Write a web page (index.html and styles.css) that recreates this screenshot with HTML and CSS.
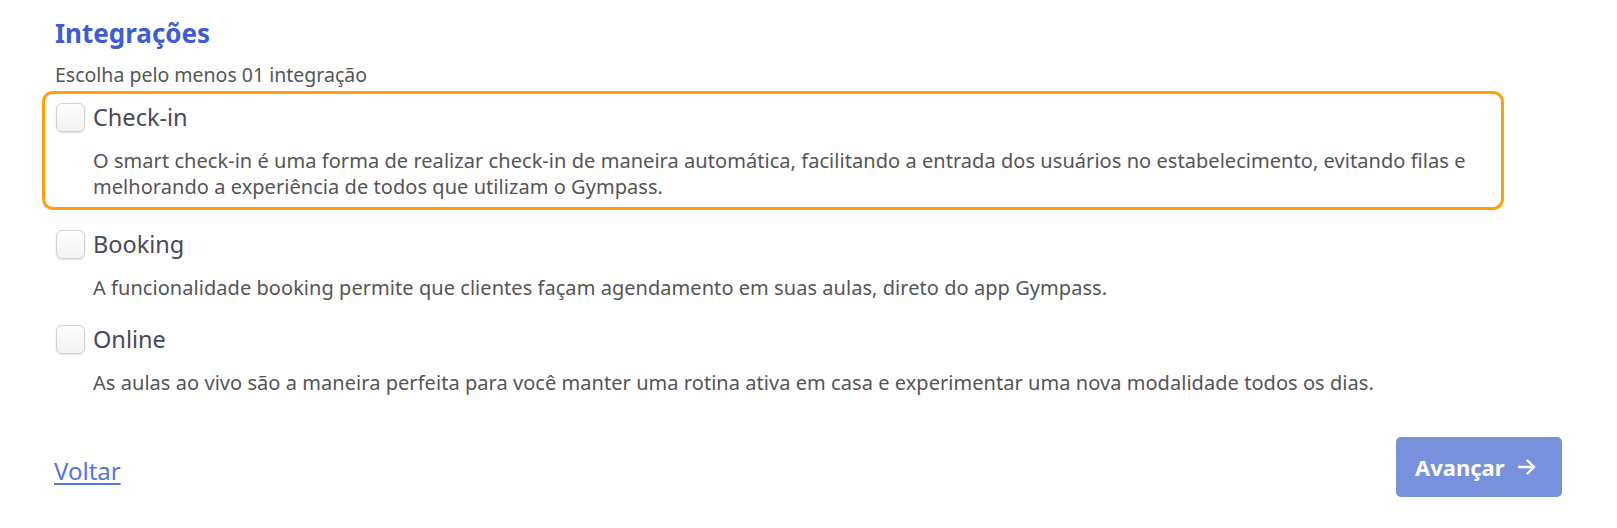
FILE: index.html
```html
<!DOCTYPE html>
<html lang="pt-BR">
<head>
<meta charset="utf-8">
<title>Integrações</title>
<link rel="stylesheet" href="styles.css">
</head>
<body>
<main class="page">
  <header class="head">
    <h1 class="title">Integrações</h1>
    <p class="subtitle">Escolha pelo menos 01 integração</p>
  </header>
  <div class="options">
    <div class="option is-focused">
      <label class="option-row"><span class="check"></span><span class="option-label">Check-in</span></label>
      <p class="option-desc">O smart check-in é uma forma de realizar check-in de maneira automática, facilitando a entrada dos usuários no estabelecimento, evitando filas e melhorando a experiência de todos que utilizam o Gympass.</p>
    </div>
    <div class="option">
      <label class="option-row"><span class="check"></span><span class="option-label">Booking</span></label>
      <p class="option-desc">A funcionalidade booking permite que clientes façam agendamento em suas aulas, direto do app Gympass.</p>
    </div>
    <div class="option">
      <label class="option-row"><span class="check"></span><span class="option-label">Online</span></label>
      <p class="option-desc">As aulas ao vivo são a maneira perfeita para você manter uma rotina ativa em casa e experimentar uma nova modalidade todos os dias.</p>
    </div>
  </div>
  <footer class="actions">
    <a class="back" href="#">Voltar</a>
    <button class="next" type="button"><span>Avançar</span>
      <svg class="arrow" width="20" height="18" viewBox="0 0 20 18" fill="none" stroke="currentColor" stroke-width="2.4" stroke-linecap="round" stroke-linejoin="round"><path d="M2 9h15M10.5 2.5L17 9l-6.5 6.5"/></svg>
    </button>
  </footer>
</main>
</body>
</html>
```
FILE: styles.css
```css
* { box-sizing: border-box; }
html, body { margin: 0; padding: 0; background: #fff; }
body { font-family: "Noto Sans", "Open Sans", sans-serif; color: #4a4a4a; }

.page { padding: 16px 0 0 42px; width: 1562px; }

.head { padding-left: 13px; }
.title { margin: 0; font-size: 26px; font-weight: 700; color: #3d5cd6; line-height: 34px; }
.subtitle { margin: 12px 0 0; font-size: 19.5px; line-height: 26px; color: #555; }

.options { width: 1462px; margin-top: 3px; display: flex; flex-direction: column; gap: 8px; }
.option { border: 3px solid transparent; border-radius: 11px; padding: 9px 12px 1px 11px; }
.option.is-focused { border-color: #ff9f0a; padding-bottom: 7px; }

.option-row { display: flex; align-items: center; gap: 8px; height: 29px; cursor: pointer; }
.check { width: 29px; height: 29px; border: 1px solid #d2d2d2; border-radius: 6px; background: linear-gradient(#fdfdfd, #f3f3f3); box-shadow: 0 1px 2px rgba(0,0,0,0.12); flex: none; }
.option-label { font-size: 23.5px; line-height: 29px; color: #474a57; }

.option-desc { margin: 16px 0 0 37px; font-size: 20px; line-height: 26px; letter-spacing: 0.05px; color: #555; }

.actions { display: flex; justify-content: space-between; align-items: flex-start; margin-top: 37px; padding-left: 12px; }
.back { margin-top: 18px; font-size: 24px; line-height: 32px; color: #5474e0; text-decoration: underline; text-decoration-thickness: 2px; text-underline-offset: 3px; }
.next { width: 166px; height: 60px; border: 0; border-radius: 5px; background: #7891dd; color: #fff; font-family: inherit; font-size: 22px; font-weight: 700; display: flex; align-items: center; justify-content: flex-start; padding: 0 0 0 19px; gap: 12px; }
.arrow { display: block; }
```
